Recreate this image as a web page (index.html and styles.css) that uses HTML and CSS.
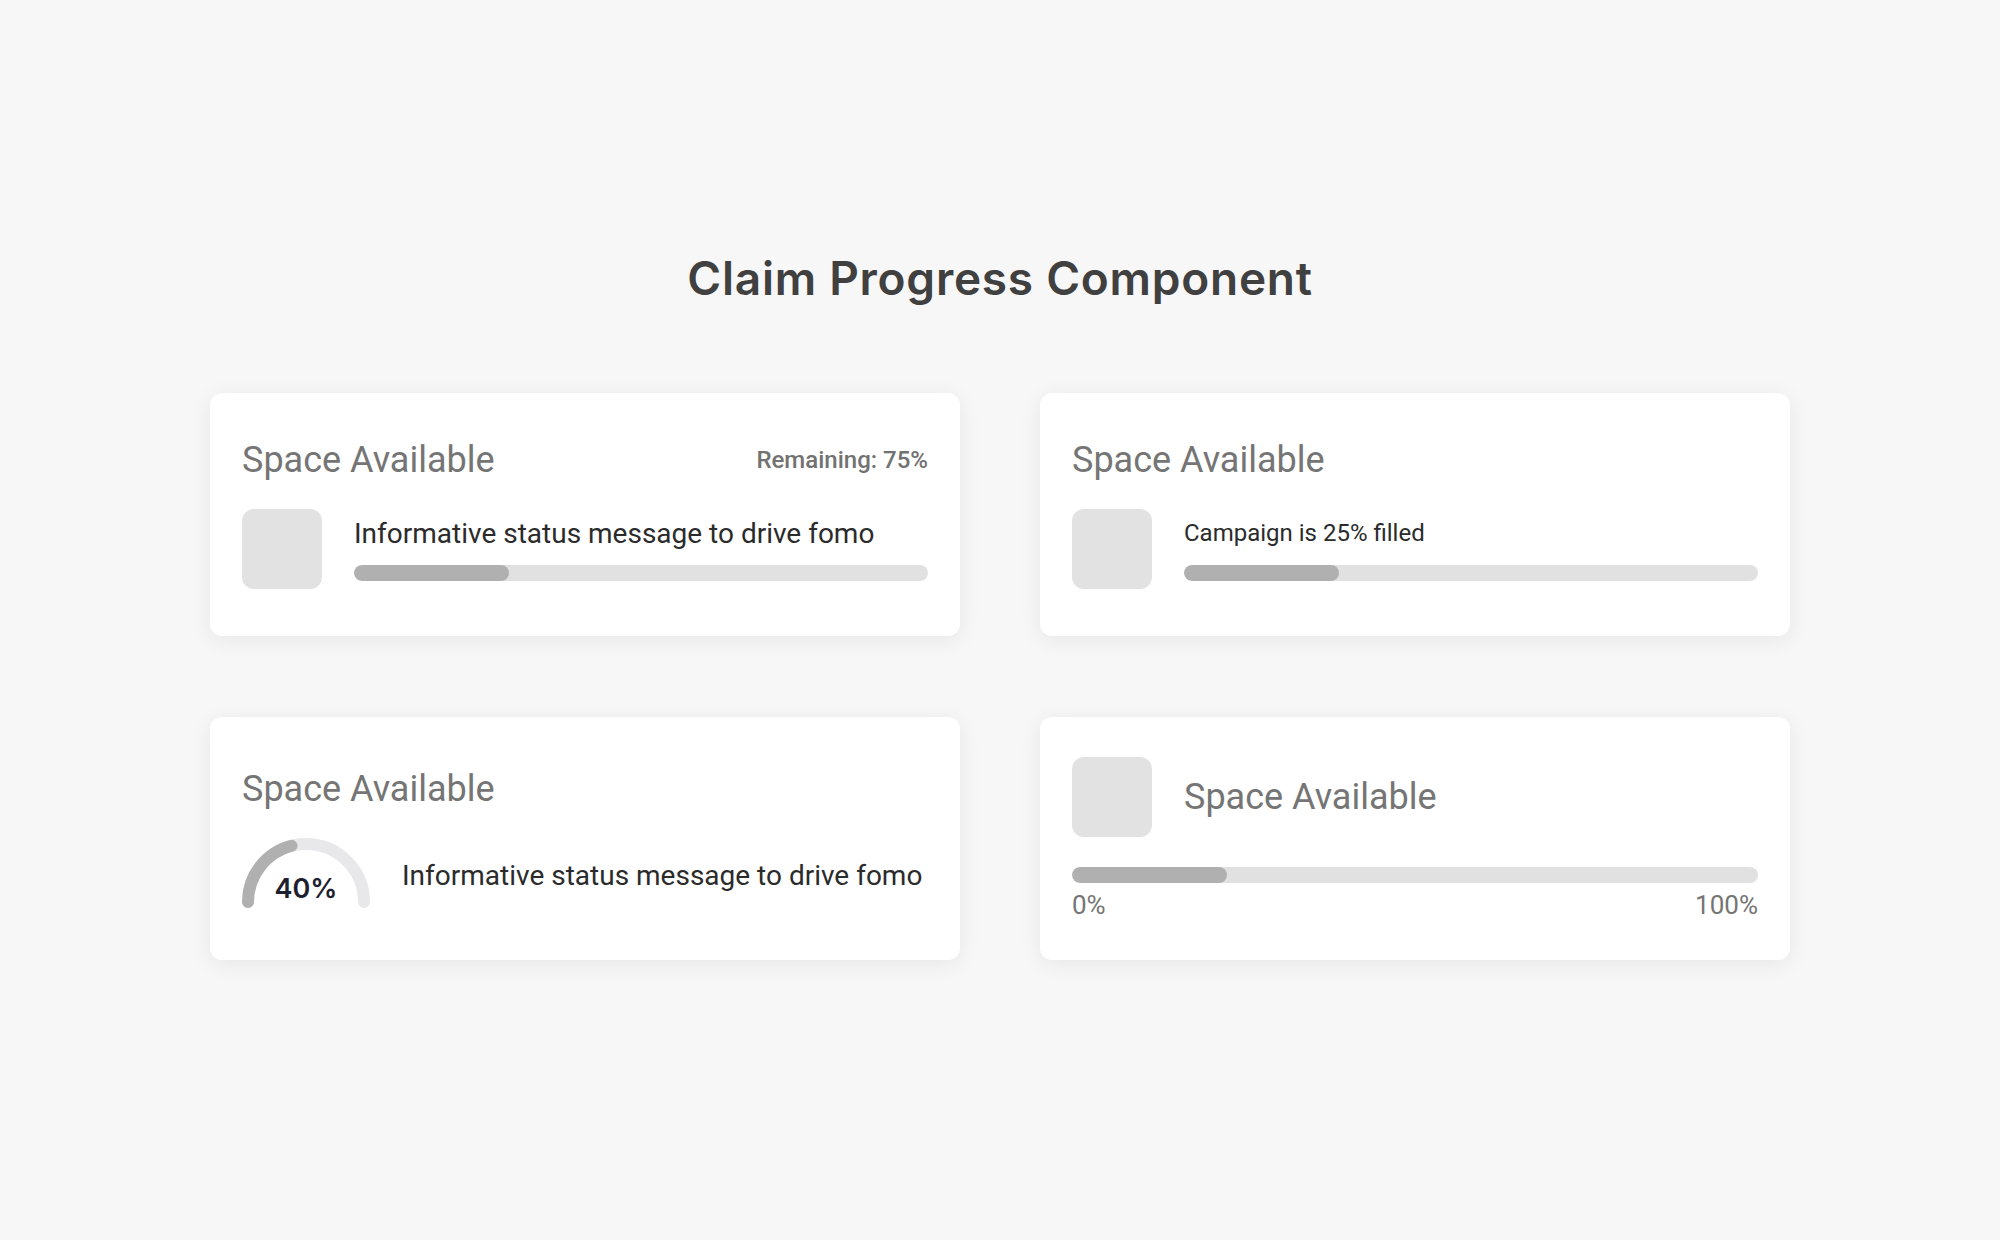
FILE: index.html
```html
<!DOCTYPE html>
<html lang="en">
<head>
<meta charset="utf-8">
<title>Claim Progress Component</title>
<link rel="stylesheet" href="styles.css">
</head>
<body>
<main class="page">
  <h1 class="page-title">Claim Progress Component</h1>
  <section class="grid">
    <div class="card">
      <div class="card-head">
        <span class="card-title">Space Available</span>
        <span class="remaining">Remaining: 75%</span>
      </div>
      <div class="row">
        <div class="thumb"></div>
        <div class="info">
          <div class="msg">Informative status message to drive fomo</div>
          <div class="bar"><div class="bar-fill" style="width:155px"></div></div>
        </div>
      </div>
    </div>

    <div class="card">
      <div class="card-head">
        <span class="card-title">Space Available</span>
      </div>
      <div class="row">
        <div class="thumb"></div>
        <div class="info">
          <div class="msg msg-sm">Campaign is 25% filled</div>
          <div class="bar"><div class="bar-fill" style="width:155px"></div></div>
        </div>
      </div>
    </div>

    <div class="card">
      <div class="card-head card-head-gauge">
        <span class="card-title">Space Available</span>
      </div>
      <div class="row">
        <div class="gauge">
          <svg width="128" height="71" viewBox="0 0 128 71">
            <path d="M6 64 A58 58 0 0 1 122 64" fill="none" stroke="#e8e8ea" stroke-width="12" stroke-linecap="round"/>
            <path d="M6 64 A58 58 0 0 1 49.5 7.8" fill="none" stroke="#b0b0b0" stroke-width="12" stroke-linecap="round"/>
          </svg>
          <span class="gauge-value">40%</span>
        </div>
        <div class="msg msg-gauge">Informative status message to drive fomo</div>
      </div>
    </div>

    <div class="card">
      <div class="row">
        <div class="thumb"></div>
        <span class="card-title">Space Available</span>
      </div>
      <div class="range">
        <div class="bar"><div class="bar-fill" style="width:155px"></div></div>
        <div class="range-labels"><span>0%</span><span>100%</span></div>
      </div>
    </div>
  </section>
</main>
</body>
</html>
```

FILE: styles.css
```css
* { box-sizing: border-box; }

html, body {
  margin: 0;
  padding: 0;
}

body {
  background: #f7f7f7;
  font-family: Roboto, "Liberation Sans", sans-serif;
  width: 2000px;
  height: 1240px;
}

.page {
  display: flex;
  flex-direction: column;
  align-items: center;
  padding-top: 251px;
}

.page-title {
  margin: 0;
  font-family: Inter, "Liberation Sans", sans-serif;
  font-weight: 600;
  font-size: 46px;
  line-height: 54px;
  color: #404040;
  letter-spacing: 0.75px;
}

.grid {
  margin-top: 88px;
  display: grid;
  grid-template-columns: 750px 750px;
  grid-auto-rows: 243px;
  column-gap: 80px;
  row-gap: 81px;
}

.card {
  background: #ffffff;
  border-radius: 12px;
  box-shadow: 0 4px 22px rgba(0, 0, 0, 0.07);
  padding: 0 32px;
  display: flex;
  flex-direction: column;
  justify-content: center;
  gap: 28px;
}

.card-head {
  display: flex;
  align-items: center;
  justify-content: space-between;
  margin-top: -2px;
}

.card-head-gauge {
  margin-top: 0;
}

.card-title {
  font-size: 36px;
  line-height: 42px;
  color: #757575;
  font-weight: 400;
}

.remaining {
  font-size: 24px;
  font-weight: 500;
  color: #727272;
}

.row {
  display: flex;
  align-items: center;
  gap: 32px;
}

.thumb {
  width: 80px;
  height: 80px;
  border-radius: 12px;
  background: #e2e2e2;
  flex: none;
}

.info {
  flex: 1;
  display: flex;
  flex-direction: column;
  gap: 15px;
}

.msg {
  font-size: 28px;
  line-height: 33px;
  color: #2b2b2b;
}

.msg-sm {
  font-size: 24px;
  line-height: 28px;
  margin-top: 3px;
  margin-bottom: 3px;
}

.msg-gauge {
  margin-top: 4px;
}

.bar {
  height: 16px;
  border-radius: 8px;
  background: #e1e1e1;
  overflow: hidden;
}

.bar-fill {
  height: 100%;
  border-radius: 8px;
  background: #b0b0b0;
}

.gauge {
  position: relative;
  width: 128px;
  height: 71px;
  flex: none;
}

.gauge svg {
  display: block;
}

.gauge-value {
  position: absolute;
  left: 0;
  right: 0;
  top: 35px;
  text-align: center;
  font-family: Inter, Roboto, sans-serif;
  font-weight: 600;
  font-size: 27px;
  line-height: 32px;
  color: #1e2030;
}

.range {
  display: flex;
  flex-direction: column;
  gap: 7px;
  margin-top: 2px;
  margin-bottom: 1px;
}

.range-labels {
  display: flex;
  justify-content: space-between;
  font-size: 26px;
  line-height: 30px;
  color: #757575;
}
```
